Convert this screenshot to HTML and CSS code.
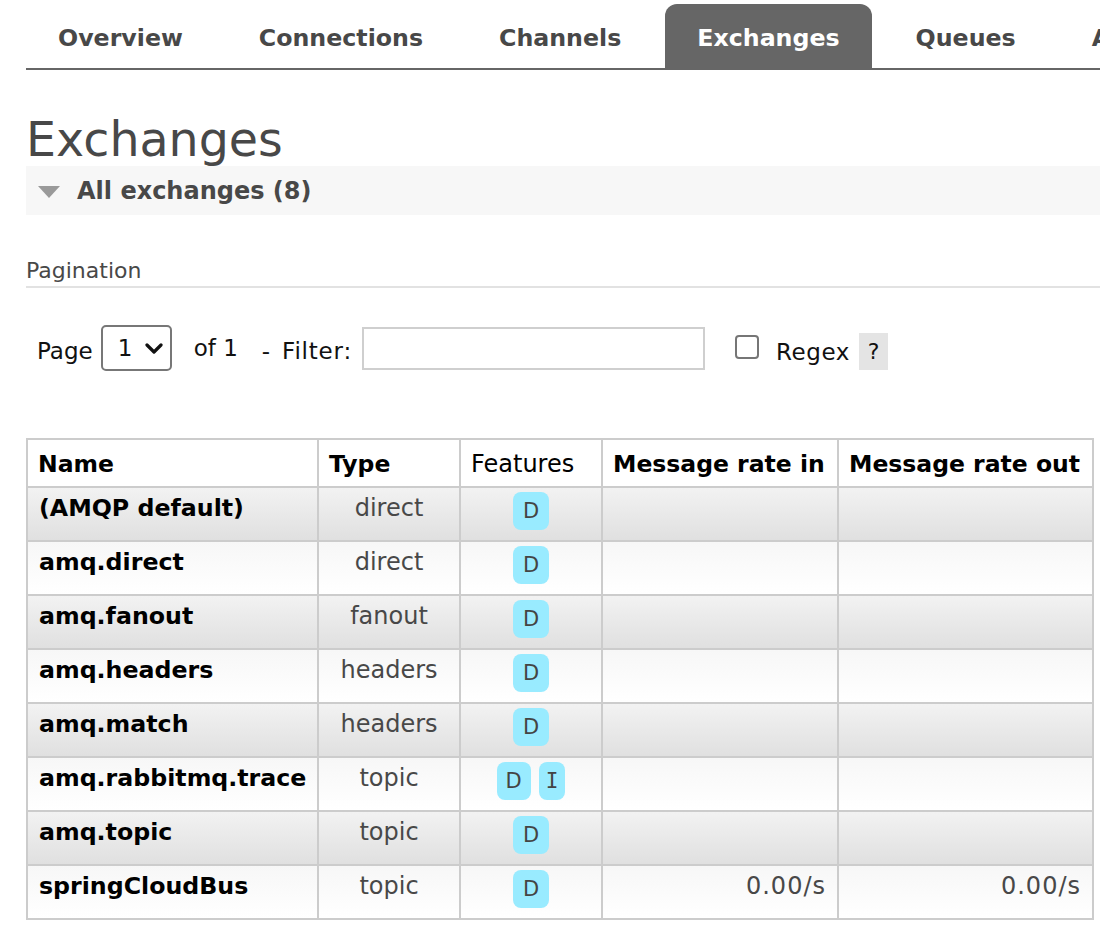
FILE: index.html
```html
<!DOCTYPE html>
<html lang="en">
<head>
<meta charset="utf-8">
<title>Exchanges</title>
<link rel="stylesheet" href="styles.css">
</head>
<body>
<div class="page">
  <nav class="tabs">
    <ul>
      <li><a href="#">Overview</a></li>
      <li><a href="#">Connections</a></li>
      <li><a href="#">Channels</a></li>
      <li class="active"><a href="#">Exchanges</a></li>
      <li><a href="#">Queues</a></li>
      <li><a href="#">Admin</a></li>
    </ul>
  </nav>

  <h1>Exchanges</h1>

  <div class="section">
    <div class="section-head">
      <span class="tri"></span>
      <span>All exchanges (8)</span>
    </div>
    <div class="section-body">
      <h3 class="pag-title">Pagination</h3>
      <div class="filter-row">
        <span class="lbl page-lbl">Page</span>
        <div class="select-wrap">
          <select class="page-select"><option>1</option></select>
          <svg class="chev" width="18" height="12" viewBox="0 0 18 12"><path d="M2 2 L9 9 L16 2" fill="none" stroke="#111" stroke-width="3.2" stroke-linecap="round" stroke-linejoin="round"/></svg>
        </div>
        <span class="lbl of">of 1</span>
        <span class="lbl filter">- Filter:</span>
        <input class="filter-input" type="text">
        <input class="regex-box" type="checkbox">
        <span class="lbl regex">Regex</span>
        <span class="help">?</span>
      </div>

      <table class="list">
        <colgroup>
          <col class="c1"><col class="c2"><col class="c3"><col class="c4"><col class="c5">
        </colgroup>
        <thead>
          <tr>
            <th>Name</th>
            <th>Type</th>
            <th class="plain">Features</th>
            <th>Message rate in</th>
            <th>Message rate out</th>
          </tr>
        </thead>
        <tbody>
          <tr class="alt1"><td class="name">(AMQP default)</td><td class="type">direct</td><td class="feat"><span class="badge">D</span></td><td class="rate"></td><td class="rate"></td></tr>
          <tr class="alt2"><td class="name">amq.direct</td><td class="type">direct</td><td class="feat"><span class="badge">D</span></td><td class="rate"></td><td class="rate"></td></tr>
          <tr class="alt1"><td class="name">amq.fanout</td><td class="type">fanout</td><td class="feat"><span class="badge">D</span></td><td class="rate"></td><td class="rate"></td></tr>
          <tr class="alt2"><td class="name">amq.headers</td><td class="type">headers</td><td class="feat"><span class="badge">D</span></td><td class="rate"></td><td class="rate"></td></tr>
          <tr class="alt1"><td class="name">amq.match</td><td class="type">headers</td><td class="feat"><span class="badge">D</span></td><td class="rate"></td><td class="rate"></td></tr>
          <tr class="alt2"><td class="name">amq.rabbitmq.trace</td><td class="type">topic</td><td class="feat"><span class="badge d-trace">D</span><span class="badge serif">I</span></td><td class="rate"></td><td class="rate"></td></tr>
          <tr class="alt1"><td class="name">amq.topic</td><td class="type">topic</td><td class="feat"><span class="badge">D</span></td><td class="rate"></td><td class="rate"></td></tr>
          <tr class="alt2"><td class="name">springCloudBus</td><td class="type">topic</td><td class="feat"><span class="badge">D</span></td><td class="rate">0.00/s</td><td class="rate">0.00/s</td></tr>
        </tbody>
      </table>
    </div>
  </div>
</div>
</body>
</html>
```

FILE: styles.css
```css
html, body {
  margin: 0;
  padding: 0;
  background: #fff;
}
body {
  font-family: "DejaVu Sans", Verdana, sans-serif;
  font-size: 22px;
  color: #000;
  overflow: hidden;
}
.page {
  padding-left: 26px;
}

/* Tabs */
.tabs {
  overflow: hidden;
  padding-top: 4px;
}
.tabs ul {
  list-style: none;
  margin: 0;
  padding: 0;
  display: flex;
  gap: 12px;
  border-bottom: 2px solid #666;
  white-space: nowrap;
}
.tabs li {
  flex-shrink: 0;
}
.tabs a {
  display: block;
  padding: 4px 32px 0;
  height: 60px;
  line-height: 60px;
  font-size: 23.7px;
  font-weight: bold;
  color: #484848;
  text-decoration: none;
  border-radius: 12px 12px 0 0;
}
.tabs li.active a {
  background: #666;
  color: #fff;
}

/* Heading */
h1 {
  margin: 43px 0 0;
  font-size: 47.5px;
  line-height: 53px;
  font-weight: normal;
  color: #484848;
}

/* Section */
.section-head {
  display: flex;
  align-items: center;
  gap: 17px;
  height: 49px;
  padding-left: 12px;
  background: #f7f7f7;
  font-size: 24px;
  font-weight: bold;
  color: #484848;
}
.tri {
  width: 0;
  height: 0;
  border-left: 11px solid transparent;
  border-right: 11px solid transparent;
  border-top: 12px solid #9a9a9a;
  margin-top: 2px;
}

.pag-title {
  margin: 43px 0 0;
  padding-bottom: 2px;
  font-size: 22px;
  line-height: 26px;
  font-weight: normal;
  color: #484848;
  border-bottom: 2px solid #e2e2e2;
}

/* Filter row */
.filter-row {
  display: flex;
  align-items: center;
  margin-top: 37px;
  padding-left: 11px;
  height: 46px;
  color: #111;
}
.lbl {
  font-size: 23px;
  line-height: 26px;
  padding-top: 5px;
}
.lbl.of {
  margin-left: 22px;
  padding-top: 0;
}
.lbl.filter {
  margin-left: 24px;
  word-spacing: 3px;
  letter-spacing: 0.8px;
}
.select-wrap {
  position: relative;
  margin-left: 8px;
  width: 71px;
  height: 46px;
}
.page-select {
  appearance: none;
  -webkit-appearance: none;
  box-sizing: border-box;
  width: 71px;
  height: 46px;
  border: 2px solid #777;
  border-radius: 5px;
  background: #fff;
  font-family: "DejaVu Sans", Verdana, sans-serif;
  font-size: 23px;
  color: #111;
  padding: 0 0 0 15px;
  margin: 0;
}
.chev {
  position: absolute;
  left: 44px;
  top: 18px;
  pointer-events: none;
}
.filter-input {
  box-sizing: border-box;
  width: 343px;
  height: 43px;
  margin: 0 0 0 10px;
  border: 2px solid #cfcfcf;
  border-radius: 0;
  padding: 0 6px;
  font-size: 22px;
}
.regex-box {
  appearance: none;
  -webkit-appearance: none;
  box-sizing: border-box;
  width: 24px;
  height: 24px;
  margin: 0 0 2px 30px;
  border: 2px solid #767676;
  border-radius: 4px;
  background: #fff;
}
.lbl.regex {
  margin-left: 17px;
  padding-top: 8px;
  letter-spacing: 0.6px;
}
.help {
  display: inline-block;
  margin-left: 9px;
  margin-top: 6px;
  width: 29px;
  height: 37px;
  line-height: 37px;
  text-align: center;
  background: #e4e4e4;
  font-size: 22px;
  color: #111;
}

/* Table */
table.list {
  margin-top: 67px;
  border-collapse: collapse;
  table-layout: fixed;
  width: 1066px;
  border: 2px solid #ccc;
}
col.c1 { width: 291px; }
col.c2 { width: 142px; }
col.c3 { width: 142px; }
col.c4 { width: 236px; }
col.c5 { width: 255px; }

table.list th,
table.list td {
  border: 2px solid #ccc;
  line-height: 26px;
  vertical-align: top;
  white-space: nowrap;
  overflow: hidden;
}
table.list th {
  padding: 11px 10px 9px;
  height: 26px;
  text-align: left;
  font-size: 23.5px;
  font-weight: bold;
  color: #000;
  background: #fff;
}
table.list th.plain {
  font-weight: normal;
  font-size: 24px;
}
table.list td {
  padding: 7px 11px 5px;
  height: 40px;
  font-size: 24px;
}
tr.alt1 td {
  background: linear-gradient(to bottom, #f2f2f2, #e0e0e0);
}
tr.alt2 td {
  background: linear-gradient(to bottom, #f7f7f7, #ffffff);
}
td.name {
  font-weight: bold;
  color: #000;
}
table.list td.name {
  font-size: 23.7px;
}
td.type {
  text-align: center;
  color: #484848;
}
table.list td.feat {
  text-align: center;
  padding-top: 4px;
}
td.rate {
  text-align: right;
  color: #484848;
  letter-spacing: 1px;
}
.badge {
  display: inline-block;
  height: 38px;
  line-height: 38px;
  padding: 0 10px;
  border-radius: 8px;
  background: #99ebff;
  color: #444;
  font-size: 21px;
  vertical-align: top;
  letter-spacing: 0;
}
.badge.d-trace {
  padding: 0 9px;
}
.badge.serif {
  font-family: "DejaVu Sans Mono", monospace;
  padding: 0 7px;
}
.badge + .badge {
  margin-left: 8px;
}
```
